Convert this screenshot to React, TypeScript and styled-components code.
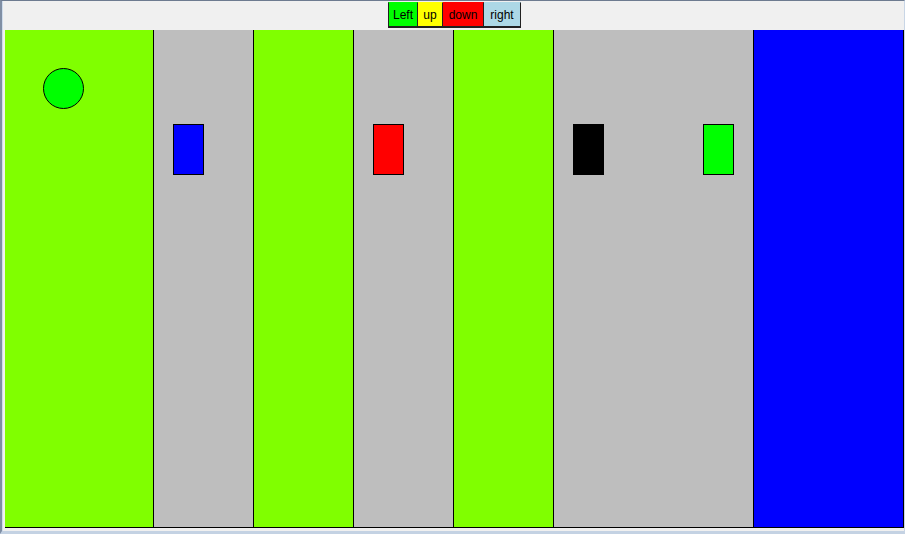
import styled, { createGlobalStyle } from "styled-components";

const GlobalStyle = createGlobalStyle`
  html, body {
    margin: 0;
    padding: 0;
    background: #f0f0f0;
  }
`;

const stripes = [
  { id: 1, width: 149, color: "#80ff00" },
  { id: 2, width: 100, color: "#bebebe" },
  { id: 3, width: 100, color: "#80ff00" },
  { id: 4, width: 100, color: "#bebebe" },
  { id: 5, width: 100, color: "#80ff00" },
  { id: 6, width: 200, color: "#bebebe" },
  { id: 7, width: 150, color: "#0000ff" },
];

const buttons = [
  { id: "left", label: "Left", width: 30, color: "#00ff00" },
  { id: "up", label: "up", width: 25, color: "#ffff00" },
  { id: "down", label: "down", width: 41, color: "#ff0000" },
  { id: "right", label: "right", width: 37, color: "#add8e6" },
];

const blocks = [
  { id: 1, x: 168, color: "#0000ff" },
  { id: 2, x: 368, color: "#ff0000" },
  { id: 3, x: 568, color: "#000000" },
  { id: 4, x: 698, color: "#00ff00" },
];

export default function App() {
  return (
    <>
      <GlobalStyle />
      <Window>
        <Toolbar>
          {buttons.map((b) => (
            <Button key={b.id} $w={b.width} $bg={b.color}>
              {b.label}
            </Button>
          ))}
        </Toolbar>
        <Canvas>
          {stripes.map((s) => (
            <Stripe key={s.id} $w={s.width} $bg={s.color} />
          ))}
          <Ball />
          {blocks.map((b) => (
            <Block key={b.id} $x={b.x} $bg={b.color} />
          ))}
        </Canvas>
      </Window>
    </>
  );
}

const Window = styled.div`
  width: 905px;
  height: 534px;
  box-sizing: border-box;
  background: #f0f0f0;
  border-left: 2px solid #7f8ea4;
  border-top: 1px solid #6d7b90;
  border-right: 1px solid #c9d6e6;
  border-bottom: 3px solid #c4d2e3;
  padding-left: 3px;
  box-shadow: inset 1px 0 0 #cfdcec;
  display: flex;
  flex-direction: column;
`;

const Toolbar = styled.div`
  height: 29px;
  display: flex;
  justify-content: center;
  align-items: flex-start;
  padding-top: 1px;
  box-sizing: border-box;
`;

const Button = styled.div<{ $w: number; $bg: string }>`
  width: ${(p) => p.$w}px;
  height: 26px;
  box-sizing: border-box;
  background: ${(p) => p.$bg};
  border-left: 1px solid #202020;
  border-top: 1px solid ${(p) => p.$bg};
  border-bottom: 2px solid #202020;
  border-right: 1px solid #202020;
  display: flex;
  align-items: center;
  justify-content: center;
  font-family: "Liberation Sans", Arial, sans-serif;
  font-size: 12px;
  color: #000;
  white-space: nowrap;
  & + & {
    border-left: none;
  }
`;

const Canvas = styled.div`
  position: relative;
  width: 899px;
  height: 498px;
  display: flex;
  overflow: hidden;
`;

const Stripe = styled.div<{ $w: number; $bg: string }>`
  width: ${(p) => p.$w}px;
  flex: none;
  height: 100%;
  box-sizing: border-box;
  background: ${(p) => p.$bg};
  border-right: 1px solid #000;
  border-bottom: 1px solid #000;
`;

const Ball = styled.div`
  position: absolute;
  left: 38px;
  top: 38px;
  width: 41px;
  height: 41px;
  box-sizing: border-box;
  border-radius: 50%;
  background: #00ff00;
  border: 1px solid #000;
`;

const Block = styled.div<{ $x: number; $bg: string }>`
  position: absolute;
  left: ${(p) => p.$x}px;
  top: 94px;
  width: 31px;
  height: 51px;
  box-sizing: border-box;
  background: ${(p) => p.$bg};
  border: 1px solid #000;
`;
